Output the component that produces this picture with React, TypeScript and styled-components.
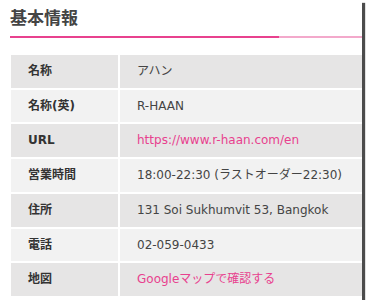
import React from 'react';
import styled, { createGlobalStyle } from 'styled-components';

const GlobalStyle = createGlobalStyle`
  html, body {
    margin: 0;
    padding: 0;
    background: #ffffff;
  }
  body {
    font-family: "DejaVu Sans", "Noto Sans CJK JP", sans-serif;
  }
`;

const colors = {
  pink: '#e8418e',
  paleLine: '#f3a9cb',
  rowDark: '#e6e5e5',
  rowLight: '#f2f2f2',
  label: '#333333',
  text: '#444444',
};

const Frame = styled('div')`
  width: 362px;
  height: 300px;
  overflow: hidden;
  background: #ffffff;
  box-shadow: 3px 3px 1px rgba(0, 0, 0, 0.7);
`;

const Section = styled('section')`
  width: 400px;
  padding: 5px 0 0 10px;
`;

const Title = styled('h2')`
  position: relative;
  margin: 0 0 15px;
  padding: 0 0 8px;
  font-family: "Noto Sans CJK JP", sans-serif;
  font-size: 17px;
  line-height: 23px;
  font-weight: 700;
  color: #444444;
  border-bottom: 2px solid ${colors.paleLine};
  &::after {
    content: '';
    position: absolute;
    left: 0;
    bottom: -2px;
    width: 269px;
    height: 2px;
    background: ${colors.pink};
  }
`;

const InfoTable = styled('table')`
  margin-left: -1px;
  width: 392px;
  border-spacing: 2px;
  border-collapse: separate;
  font-size: 12px;
`;

const Row = styled('tr')<{ $even: boolean }>`
  background: ${p => (p.$even ? colors.rowLight : colors.rowDark)};
`;

const Label = styled('th')`
  width: 90px;
  padding: 8px 0 8px 17px;
  text-align: left;
  font-weight: 700;
  line-height: 16.7px;
  color: ${colors.label};
  white-space: nowrap;
`;

const Value = styled('td')`
  padding: 8px 0 8px 17px;
  line-height: 16.7px;
  color: ${colors.text};
  white-space: nowrap;
`;

const PinkLink = styled('a')`
  color: ${colors.pink};
  text-decoration: none;
`;

interface InfoItem {
  label: string
  value: string
  link?: boolean
}

const items: InfoItem[] = [
  { label: '名称', value: 'アハン' },
  { label: '名称(英)', value: 'R-HAAN' },
  { label: 'URL', value: 'https://www.r-haan.com/en', link: true },
  { label: '営業時間', value: '18:00-22:30 (ラストオーダー22:30)' },
  { label: '住所', value: '131 Soi Sukhumvit 53, Bangkok' },
  { label: '電話', value: '02-059-0433' },
  { label: '地図', value: 'Googleマップで確認する', link: true },
];

function App() {
  return (
    <>
      <GlobalStyle />
      <Frame>
        <Section>
          <Title>基本情報</Title>
          <InfoTable>
            <tbody>
              {items.map((item, i) => (
                <Row key={item.label} $even={i % 2 === 1}>
                  <Label>{item.label}</Label>
                  <Value>
                    {item.link ? <PinkLink href="#">{item.value}</PinkLink> : item.value}
                  </Value>
                </Row>
              ))}
            </tbody>
          </InfoTable>
        </Section>
      </Frame>
    </>
  );
}

export default App;
